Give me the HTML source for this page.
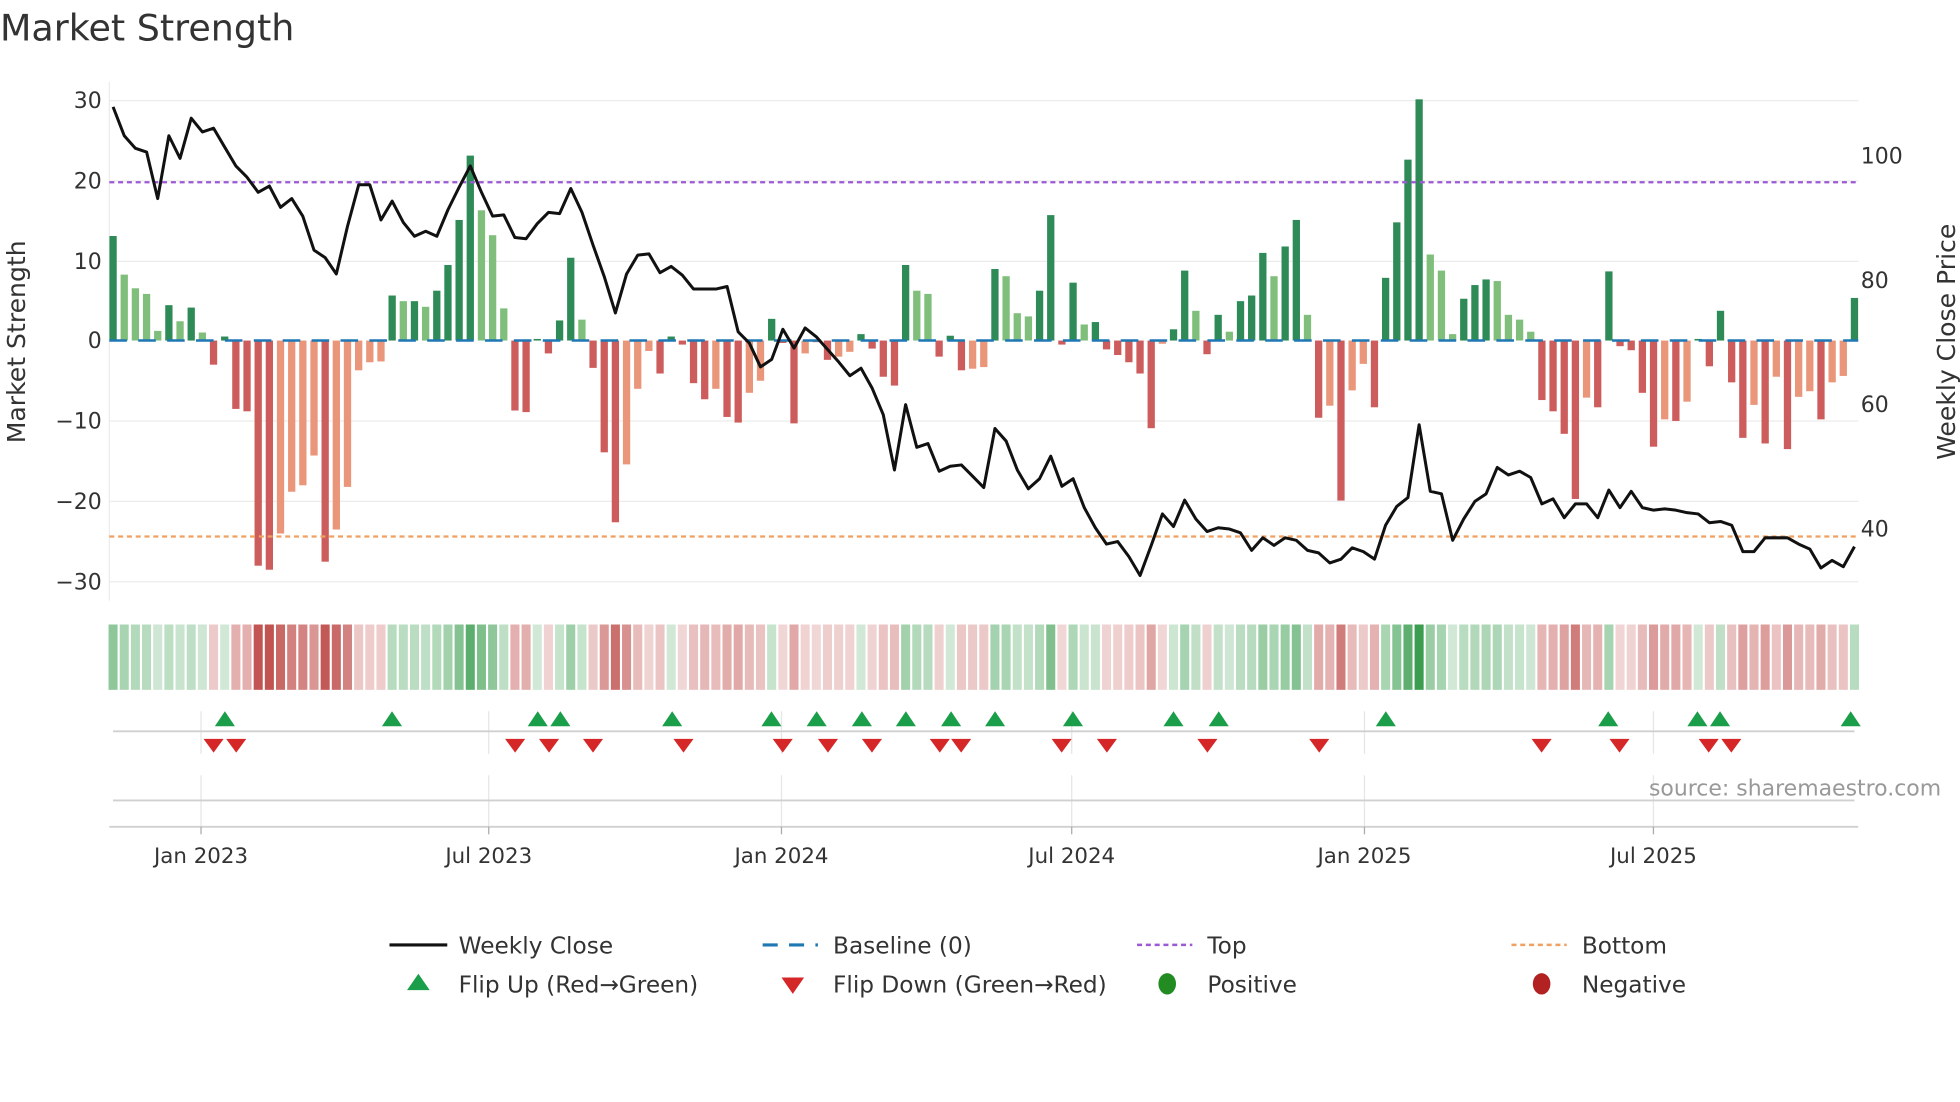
<!DOCTYPE html>
<html><head><meta charset="utf-8"><style>
html,body{margin:0;padding:0;background:#fff;}
svg{display:block;font-family:"DejaVu Sans","Liberation Sans",sans-serif;}
</style></head><body>
<svg id="c" width="1960" height="1102" viewBox="0 0 1560 877" xmlns="http://www.w3.org/2000/svg">
<rect width="1560" height="877" fill="#fff"/>
<text x="0" y="32" font-size="29" fill="#333">Market Strength</text>
<g id="grid" stroke="#ececec" stroke-width="1">
<line x1="87" x2="1479" y1="80" y2="80"/><line x1="87" x2="1479" y1="144" y2="144"/>
<line x1="87" x2="1479" y1="208" y2="208"/><line x1="87" x2="1479" y1="335" y2="335"/>
<line x1="87" x2="1479" y1="399" y2="399"/><line x1="87" x2="1479" y1="463" y2="463"/>
<line x1="87" x2="87" y1="65" y2="478"/>
</g>
<g font-size="17.5" fill="#333" text-anchor="end">
<text x="81" y="86">30</text><text x="81" y="150">20</text><text x="81" y="214">10</text>
<text x="81" y="277">0</text><text x="81" y="341">−10</text><text x="81" y="405">−20</text><text x="81" y="469">−30</text>
</g>
<g font-size="17.5" fill="#333">
<text x="1481" y="130">100</text><text x="1481" y="229">80</text><text x="1481" y="328">60</text><text x="1481" y="427">40</text>
</g>
<text transform="translate(20,272) rotate(-90)" font-size="20" fill="#333" text-anchor="middle">Market Strength</text>
<text transform="translate(1556,272) rotate(-90)" font-size="20" fill="#333" text-anchor="middle">Weekly Close Price</text>
<g id="bars"></g>
<line x1="87" x2="1479" y1="271" y2="271" stroke="#1f77b4" stroke-width="2" stroke-dasharray="14,9"/>
<line x1="87" x2="1479" y1="145" y2="145" stroke="#9b59d6" stroke-width="1.8" stroke-dasharray="4,3"/>
<line x1="87" x2="1479" y1="427" y2="427" stroke="#f0a060" stroke-width="1.8" stroke-dasharray="4,3"/>
<polyline id="price" fill="none" stroke="#111" stroke-width="2.4" stroke-linejoin="round"/>
<g id="heat"></g>
<g stroke="#e6e6e6" stroke-width="1">
<line x1="160" x2="160" y1="566" y2="600"/><line x1="389" x2="389" y1="566" y2="600"/>
<line x1="622" x2="622" y1="566" y2="600"/><line x1="853" x2="853" y1="566" y2="600"/>
<line x1="1086" x2="1086" y1="566" y2="600"/><line x1="1316" x2="1316" y1="566" y2="600"/>
<line x1="160" x2="160" y1="617" y2="658"/><line x1="389" x2="389" y1="617" y2="658"/>
<line x1="622" x2="622" y1="617" y2="658"/><line x1="853" x2="853" y1="617" y2="658"/>
<line x1="1086" x2="1086" y1="617" y2="658"/><line x1="1316" x2="1316" y1="617" y2="658"/>
</g>
<line x1="90" x2="1476" y1="582" y2="582" stroke="#d0d0d0" stroke-width="1.5"/>
<line x1="90" x2="1476" y1="637" y2="637" stroke="#d0d0d0" stroke-width="1.5"/>
<line x1="87" x2="1479" y1="658" y2="658" stroke="#d0d0d0" stroke-width="1.5"/>
<g stroke="#aaa" stroke-width="1">
<line x1="160" x2="160" y1="658" y2="664"/><line x1="389" x2="389" y1="658" y2="664"/>
<line x1="622" x2="622" y1="658" y2="664"/><line x1="853" x2="853" y1="658" y2="664"/>
<line x1="1086" x2="1086" y1="658" y2="664"/><line x1="1316" x2="1316" y1="658" y2="664"/>
</g>
<g id="flips"></g>
<text x="1545" y="633" font-size="17.5" fill="#999" text-anchor="end">source: sharemaestro.com</text>
<g font-size="17" fill="#333" text-anchor="middle">
<text x="160" y="687">Jan 2023</text><text x="389" y="687">Jul 2023</text><text x="622" y="687">Jan 2024</text>
<text x="853" y="687">Jul 2024</text><text x="1086" y="687">Jan 2025</text><text x="1316" y="687">Jul 2025</text>
</g>
<g font-size="18.5" fill="#333">
<line x1="310" x2="356" y1="752" y2="752" stroke="#111" stroke-width="2.5"/>
<text x="365" y="759">Weekly Close</text>
<line x1="607" x2="651" y1="752" y2="752" stroke="#1f77b4" stroke-width="2.5" stroke-dasharray="12,9"/>
<text x="663" y="759">Baseline (0)</text>
<line x1="905" x2="949" y1="752" y2="752" stroke="#9b59d6" stroke-width="2" stroke-dasharray="4,3"/>
<text x="961" y="759">Top</text>
<line x1="1203" x2="1247" y1="752" y2="752" stroke="#f0a060" stroke-width="2" stroke-dasharray="4,3"/>
<text x="1259" y="759">Bottom</text>
<polygon points="324,788 342,788 333,775" fill="#1a9e4a"/>
<text x="365" y="790">Flip Up (Red→Green)</text>
<polygon points="622,778 640,778 631,791" fill="#d62728"/>
<text x="663" y="790">Flip Down (Green→Red)</text>
<ellipse cx="929" cy="783" rx="7" ry="8.5" fill="#228b22"/>
<text x="961" y="790">Positive</text>
<ellipse cx="1227" cy="783" rx="7" ry="8.5" fill="#b22222"/>
<text x="1259" y="790">Negative</text>
</g>
</svg>
<script>
var V=[[13,'d'],[8.2,'l'],[6.5,'l'],[5.8,'l'],[1.2,'l'],[4.4,'d'],[2.4,'l'],[4.1,'d'],[1,'l'],[-3,'r'],[0.5,'d'],[-8.5,'r'],[-8.8,'r'],[-28,'r'],[-28.5,'r'],[-24,'o'],[-18.8,'o'],[-18,'o'],[-14.3,'o'],[-27.5,'r'],[-23.5,'o'],[-18.2,'o'],[-3.7,'o'],[-2.7,'o'],[-2.6,'o'],[5.6,'d'],[4.9,'l'],[4.9,'d'],[4.2,'l'],[6.2,'d'],[9.4,'d'],[15,'d'],[23,'d'],[16.2,'l'],[13.1,'l'],[4,'l'],[-8.7,'r'],[-8.9,'r'],[0.2,'d'],[-1.6,'r'],[2.5,'d'],[10.3,'d'],[2.6,'l'],[-3.4,'r'],[-13.9,'r'],[-22.6,'r'],[-15.4,'o'],[-6,'o'],[-1.3,'o'],[-4.1,'r'],[0.5,'d'],[-0.5,'r'],[-5.3,'r'],[-7.3,'r'],[-6,'o'],[-9.5,'r'],[-10.2,'r'],[-6.5,'o'],[-5,'o'],[2.7,'d'],[-0.3,'r'],[-10.3,'r'],[-1.6,'o'],[-0.2,'r'],[-2.4,'r'],[-2,'o'],[-1.4,'o'],[0.8,'d'],[-1,'r'],[-4.5,'r'],[-5.6,'r'],[9.4,'d'],[6.2,'l'],[5.8,'l'],[-2,'r'],[0.6,'d'],[-3.7,'r'],[-3.5,'o'],[-3.3,'o'],[8.9,'d'],[8,'l'],[3.4,'l'],[3,'l'],[6.2,'d'],[15.6,'d'],[-0.5,'r'],[7.2,'d'],[2,'l'],[2.3,'d'],[-1.1,'r'],[-1.8,'r'],[-2.7,'r'],[-4.1,'r'],[-10.9,'r'],[-0.4,'o'],[1.4,'d'],[8.7,'d'],[3.7,'l'],[-1.7,'r'],[3.2,'d'],[1.1,'l'],[4.9,'d'],[5.6,'d'],[10.9,'d'],[8,'l'],[11.7,'d'],[15,'d'],[3.2,'l'],[-9.6,'r'],[-8.1,'o'],[-19.9,'r'],[-6.2,'o'],[-2.9,'o'],[-8.3,'r'],[7.8,'d'],[14.7,'d'],[22.5,'d'],[30,'d'],[10.7,'l'],[8.7,'l'],[0.8,'l'],[5.2,'d'],[6.9,'d'],[7.6,'d'],[7.4,'l'],[3.2,'l'],[2.6,'l'],[1.1,'l'],[-7.4,'r'],[-8.8,'r'],[-11.6,'r'],[-19.7,'r'],[-7.1,'o'],[-8.3,'r'],[8.6,'d'],[-0.7,'r'],[-1.2,'r'],[-6.5,'r'],[-13.2,'r'],[-9.8,'o'],[-10,'r'],[-7.6,'o'],[0.2,'d'],[-3.2,'r'],[3.7,'d'],[-5.2,'r'],[-12.1,'r'],[-8,'o'],[-12.8,'r'],[-4.5,'o'],[-13.5,'r'],[-7,'o'],[-6.3,'o'],[-9.8,'r'],[-5.2,'o'],[-4.4,'o'],[5.3,'d']];
var P=[85,108,118,121,158,108,126,94,105,102,117,132,141,153,148,165,158,172,199,205,218,180,147,147,175,160,177,188,184,188,167,149,132,153,172,171,189,190,178,169,170,150,169,195,220,249,218,203,202,217,212,219,230,230,230,228,264,273,292,286,262,277,261,268,278,288,299,293,309,330,374,322,356,353,375,371,370,379,388,341,351,374,389,381,363,387,381,404,420,433,431,443,458,434,409,419,398,413,423,420,421,424,438,428,434,428,430,438,440,448,445,436,439,445,418,403,396,338,391,393,430,413,399,393,372,378,375,380,401,397,412,401,401,412,390,404,391,404,406,405,406,408,409,416,415,418,439,439,428,428,428,433,437,452,446,451,435];
var C={d:'#2e8b57',l:'#7fbf7b',r:'#cd5c5c',o:'#e9967a'};
var ns='http://www.w3.org/2000/svg',n=V.length,step=(1476-90)/(n-1);
function el(t,a,p){var e=document.createElementNS(ns,t);for(var k in a)e.setAttribute(k,a[k]);document.getElementById(p).appendChild(e);}
var pts=[];
for(var i=0;i<n;i++){var x=90+i*step,v=V[i][0],y0=271,y1=271-v*6.4;
el('rect',{x:x-2.9,y:Math.min(y0,y1),width:5.8,height:Math.max(Math.abs(y1-y0),0.8),fill:C[V[i][1]]},'bars');
var a=Math.min(1,0.22+Math.abs(v)/30*0.8);
el('rect',{x:x-3.6,y:497,width:7.2,height:52,fill:v>=0?'#3a9d4f':'#c0504d','fill-opacity':a.toFixed(2)},'heat');
if(i<P.length)pts.push(x.toFixed(1)+','+P[i]);}
document.getElementById('price').setAttribute('points',pts.join(' '));
[179,312,428,446,535,614,650,686,721,757,792,854,934,970,1103,1280,1351,1369,1473].forEach(function(x){el('polygon',{points:(x-8)+',578 '+(x+8)+',578 '+x+',566',fill:'#1a9e4a'},'flips');});
[170,188,410,437,472,544,623,659,694,748,765,845,881,961,1050,1227,1289,1360,1378].forEach(function(x){el('polygon',{points:(x-8)+',588 '+(x+8)+',588 '+x+',599',fill:'#d62728'},'flips');});
</script>
</body></html>
